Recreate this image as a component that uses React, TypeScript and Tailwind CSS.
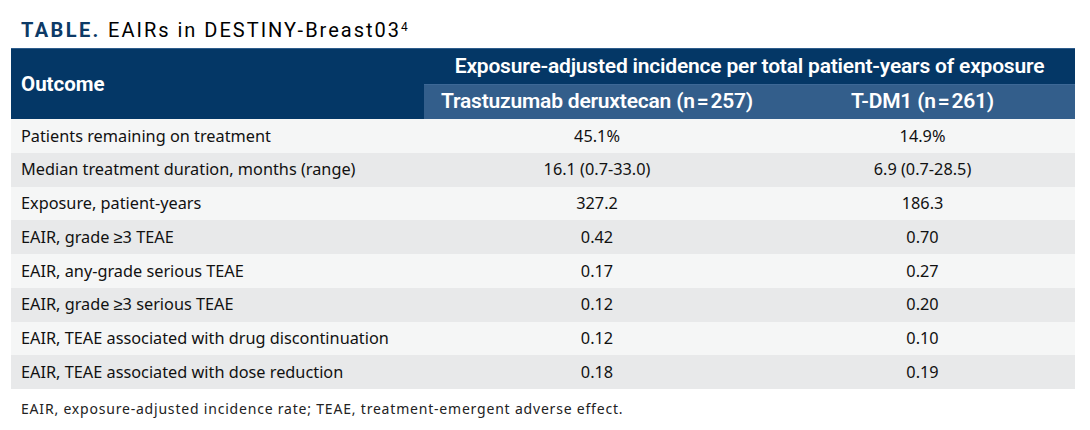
const rows = [
  ["Patients remaining on treatment", "45.1%", "14.9%"],
  ["Median treatment duration, months (range)", "16.1 (0.7-33.0)", "6.9 (0.7-28.5)"],
  ["Exposure, patient-years", "327.2", "186.3"],
  ["EAIR, grade \u22653 TEAE", "0.42", "0.70"],
  ["EAIR, any-grade serious TEAE", "0.17", "0.27"],
  ["EAIR, grade \u22653 serious TEAE", "0.12", "0.20"],
  ["EAIR, TEAE associated with drug discontinuation", "0.12", "0.10"],
  ["EAIR, TEAE associated with dose reduction", "0.18", "0.19"],
];

export default function App() {
  return (
    <div className="h-[430px] w-[1090px] bg-white font-['Noto_Sans',sans-serif] text-[#111]">
      <h1 className="pl-[21px] pt-[18px] text-[20px] leading-[24px] tracking-[2px]">
        <span className="font-['Roboto',sans-serif] font-bold tracking-[2.4px] text-[#0d3a66]">TABLE.</span>{" "}
        <span className="font-['Roboto',sans-serif] text-black">
          EAIRs in DESTINY-Breast03<sup className="text-[12px]">4</sup>
        </span>
      </h1>

      <div className="ml-[11px] mt-[6px] w-[1064px]">
        <div className="grid grid-cols-[413px_346px_305px] border-t border-[#2d5c8c] bg-[#043766] font-['Roboto',sans-serif] font-semibold text-white">
          <div className="row-span-2 flex items-center pl-[10px] text-[20.5px] font-bold">Outcome</div>
          <div className="col-span-2 flex h-[35px] items-center justify-center text-[21px] tracking-[-0.2px]">
            Exposure-adjusted incidence per total patient-years of exposure
          </div>
          <div className="flex h-[35px] items-center justify-center border-t border-[#3d6896] bg-[#335e8b] text-[21px] tracking-[-0.2px]">
            Trastuzumab deruxtecan (n&#8202;=&#8202;257)
          </div>
          <div className="flex h-[35px] items-center justify-center border-t border-[#3d6896] bg-[#335e8b] text-[21px] tracking-[-0.2px]">
            T-DM1 (n&#8202;=&#8202;261)
          </div>
        </div>

        {rows.map((r, i) => (
          <div
            key={i}
            className={`grid h-[33.75px] grid-cols-[413px_346px_305px] items-center text-[16.3px] ${
              i % 2 === 0 ? "bg-[#f5f6f6]" : "bg-[#e8e9ea]"
            }`}
          >
            <div className="pl-[10px]">{r[0]}</div>
            <div className="text-center">{r[1]}</div>
            <div className="text-center">{r[2]}</div>
          </div>
        ))}
      </div>

      <p className="pl-[21px] pt-[9px] text-[14px] tracking-[0.8px] text-[#222]">
        EAIR, exposure-adjusted incidence rate; TEAE, treatment-emergent adverse effect.
      </p>
    </div>
  );
}
